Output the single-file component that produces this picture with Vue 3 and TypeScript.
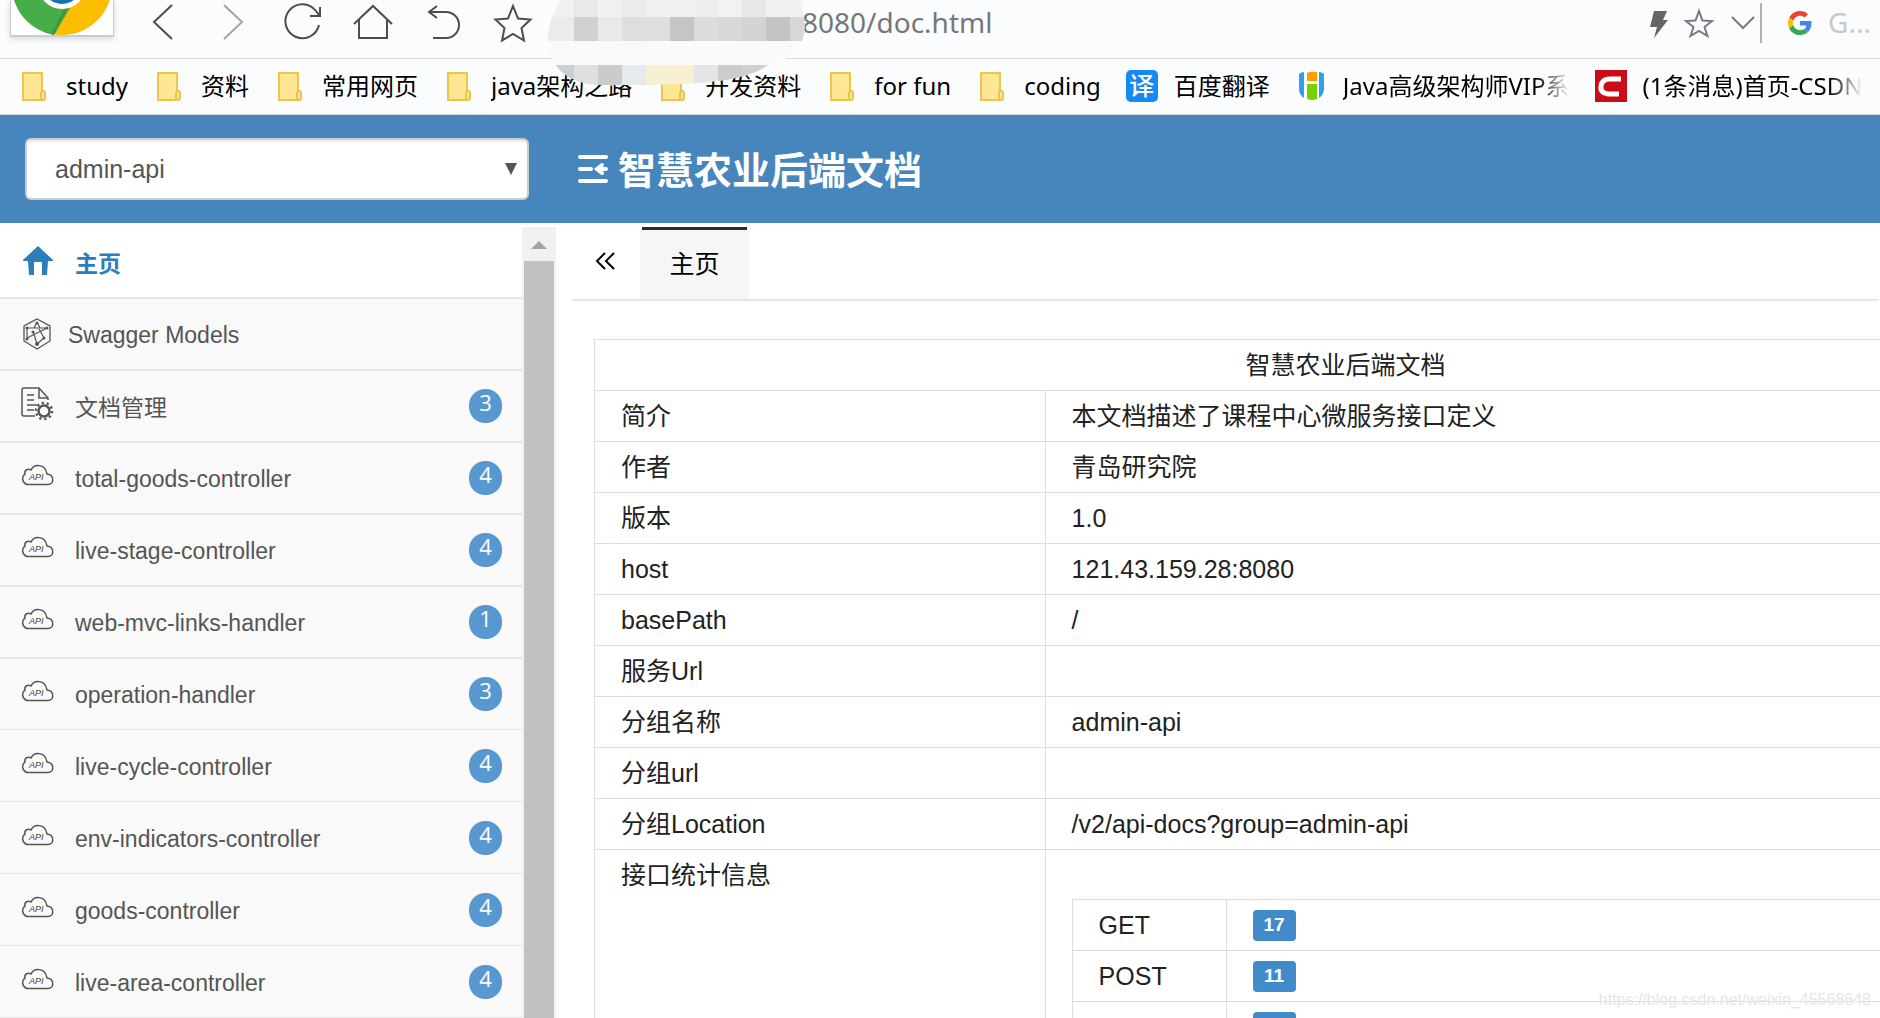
<script setup lang="ts">
import { ref } from 'vue'

interface Bookmark {
  label: string
  icon: 'folder' | 'translate' | 'h' | 'csdn'
}

interface MenuItem {
  label: string
  icon: 'home' | 'model' | 'doc' | 'api'
  count?: number
}

const group = ref('admin-api')
const address = ref('8080/doc.html')

const bookmarks: Bookmark[] = [
  { label: 'study', icon: 'folder' },
  { label: '资料', icon: 'folder' },
  { label: '常用网页', icon: 'folder' },
  { label: 'java架构之路', icon: 'folder' },
  { label: '开发资料', icon: 'folder' },
  { label: 'for fun', icon: 'folder' },
  { label: 'coding', icon: 'folder' },
  { label: '百度翻译', icon: 'translate' },
  { label: 'Java高级架构师VIP系', icon: 'h' },
  { label: '(1条消息)首页-CSDN', icon: 'csdn' },
]

const menu: MenuItem[] = [
  { label: '主页', icon: 'home' },
  { label: 'Swagger Models', icon: 'model' },
  { label: '文档管理', icon: 'doc', count: 3 },
  { label: 'total-goods-controller', icon: 'api', count: 4 },
  { label: 'live-stage-controller', icon: 'api', count: 4 },
  { label: 'web-mvc-links-handler', icon: 'api', count: 1 },
  { label: 'operation-handler', icon: 'api', count: 3 },
  { label: 'live-cycle-controller', icon: 'api', count: 4 },
  { label: 'env-indicators-controller', icon: 'api', count: 4 },
  { label: 'goods-controller', icon: 'api', count: 4 },
  { label: 'live-area-controller', icon: 'api', count: 4 },
]

const info: [string, string][] = [
  ['简介', '本文档描述了课程中心微服务接口定义'],
  ['作者', '青岛研究院'],
  ['版本', '1.0'],
  ['host', '121.43.159.28:8080'],
  ['basePath', '/'],
  ['服务Url', ''],
  ['分组名称', 'admin-api'],
  ['分组url', ''],
  ['分组Location', '/v2/api-docs?group=admin-api'],
]

const stats: [string, string][] = [
  ['GET', '17'],
  ['POST', '11'],
  ['', ''],
]

const mosaic = [
  { y: 0, h: 17, cells: ['#f0f1f2', '#e8e9ea', '#f0f1f2', '#ebebec', '#eff0f1', '#eff0f1', '#eeeeef', '#f1f2f3', '#e7e8e9', '#f1f1f2', '#f1f1f2'] },
  { y: 17, h: 24, cells: ['#eaebec', '#cfd0d1', '#e9e9ea', '#dddedf', '#dfdfe0', '#c5c5c7', '#dcdcde', '#d8d8da', '#d3d4d5', '#c3c4c6', '#d7d7d8'] },
  { y: 41, h: 24, cells: Array(11).fill('#f9fafc') as string[] },
  { y: 65, h: 20, cells: ['#cbcfd2', '#dedfe1', '#cbcbcd', '#e5eaed', '#f8f0d2', '#f9f0cf', '#e4e5e6', '#cbccce', '#d0d0d2', '#cbcbcd', '#cbcbcd'] },
]
</script>

<template>
  <div class="window">
    <div class="toolbar">
      <div class="brand">
        <svg width="102" height="35" viewBox="11 0 102 35" aria-hidden="true">
          <circle cx="62" cy="-15" r="50" fill="#fdbd00" />
          <path d="M12 -15 L38 -20 L70 8 L54 35 A50 50 0 0 1 12 -15Z" fill="#46ad48" />
          <path d="M70 5 L54 35 L51 34 L64 9Z" fill="#3a9a40" />
          <circle cx="62" cy="-15" r="24" fill="#fff" />
          <circle cx="62" cy="-15" r="19" fill="#1273b8" />
        </svg>
      </div>
      <button class="nav" aria-label="back">
        <svg viewBox="0 0 70 44"><path d="M44 5 26 22 44 39" /></svg>
      </button>
      <button class="nav dim" aria-label="forward">
        <svg viewBox="0 0 70 44"><path d="M26 5 44 22 26 39" /></svg>
      </button>
      <button class="nav" aria-label="reload">
        <svg viewBox="0 0 70 44"><path d="M51 25A17 17 0 1 1 48 11L51 15M52 7V16H42" /></svg>
      </button>
      <button class="nav" aria-label="home">
        <svg viewBox="0 0 70 44"><path d="M16 24 35 6 54 24M21 20V38H49V20" /></svg>
      </button>
      <button class="nav" aria-label="undo">
        <svg viewBox="0 0 70 44"><path d="M29 6 21 12 29 18M21 12H38A13 13 0 0 1 38 38H25" /></svg>
      </button>
      <button class="nav" aria-label="favourite">
        <svg viewBox="0 0 70 44">
          <path d="M35 6 40 18.500 52.500 19.500 43.500 28 46 40.500 35 34 24 40.500 26.500 28 17.500 19.500 30 18.500Z" />
        </svg>
      </button>
      <input v-model="address" class="address" aria-label="address" />
      <button class="tool" aria-label="speed">
        <svg viewBox="0 0 40 48">
          <path d="M14 11H27L23 20H28L14 38 17 27H10Z" fill="#666" />
        </svg>
      </button>
      <button class="tool" aria-label="collect">
        <svg viewBox="0 0 40 48">
          <path d="M19 11 22.500 20.500 32 21 24.500 27 27.500 36 19 31 10.500 36 13.500 27 6 21 15.500 20.500Z" fill="none" stroke="#777a7e" stroke-width="2" />
        </svg>
      </button>
      <button class="tool" aria-label="more">
        <svg viewBox="0 0 40 48"><path d="M12 17 23 28 34 17" fill="none" stroke="#777a7e" stroke-width="2" /></svg>
      </button>
      <div class="search">
        <svg width="24" height="24" viewBox="0 0 48 48" aria-hidden="true">
          <path fill="#ea4335" d="M24 9.500c3.540 0 6.710 1.220 9.210 3.600l6.850-6.850C35.900 2.380 30.470 0 24 0 14.620 0 6.510 5.380 2.560 13.220l7.980 6.190C12.430 13.720 17.740 9.500 24 9.500z" />
          <path fill="#4285f4" d="M46.980 24.550c0-1.570-.15-3.090-.38-4.550H24v9.020h12.940c-.58 2.960-2.260 5.480-4.780 7.180l7.730 6c4.510-4.180 7.090-10.360 7.090-17.650z" />
          <path fill="#fbbc05" d="M10.530 28.590c-.48-1.450-.76-2.990-.76-4.590s.27-3.140.76-4.590l-7.980-6.190C.92 16.460 0 20.120 0 24c0 3.880.92 7.540 2.560 10.780l7.970-6.190z" />
          <path fill="#34a853" d="M24 48c6.480 0 11.930-2.130 15.890-5.810l-7.730-6c-2.150 1.450-4.920 2.300-8.160 2.300-6.260 0-11.570-4.220-13.470-9.910l-7.980 6.190C6.510 42.620 14.620 48 24 48z" />
        </svg>
        <input placeholder="G..." aria-label="search" />
      </div>
    </div>

    <nav class="bookmarks">
      <a v-for="b in bookmarks" :key="b.label" href="#" class="bookmark">
        <svg v-if="b.icon === 'folder'" width="32" height="32" viewBox="0 0 32 32">
          <path d="M5 3H24V30H5Z" fill="#ffe694" stroke="#ecc54a" stroke-width="2" />
          <rect x="23" y="21" width="4" height="9" rx="2" fill="#ffe694" stroke="#ecc54a" stroke-width="2" />
        </svg>
        <span v-else-if="b.icon === 'translate'" class="translate">译</span>
        <svg v-else-if="b.icon === 'h'" width="32" height="32" viewBox="0 0 32 32">
          <rect width="32" height="32" fill="#fff" />
          <path d="M9 2V28C6 26 4 23 4 19V4Q6 2 9 2Z" fill="#29a0f5" />
          <path d="M24 2V28C27 26 29 23 29 19V4Q27 2 24 2Z" fill="#29a0f5" />
          <path d="M12 3Q16 1 22 2V11H12Z" fill="#ff9c00" />
          <path d="M12 14H22V29Q17 31 12 29Z" fill="#76d100" />
        </svg>
        <svg v-else width="32" height="32" viewBox="0 0 32 32">
          <rect width="32" height="32" fill="#cb0c17" />
          <path d="M26 9H15Q7 9 6 16T13 24H24" fill="none" stroke="#fff" stroke-width="5" />
        </svg>
        <span class="bookmark-label">{{ b.label }}</span>
      </a>
    </nav>

    <svg class="mosaic" width="258" height="85" viewBox="0 0 258 85" aria-hidden="true">
      <defs>
        <clipPath id="blob">
          <path d="M14 0C6 12 2 24 1 36C2 58 10 82 50 85H106C150 84 200 82 221 65C244 60 258 48 258 24L254 0Z" />
        </clipPath>
      </defs>
      <g clip-path="url(#blob)" shape-rendering="crispEdges">
        <template v-for="row in mosaic" :key="row.y">
          <rect
            v-for="(c, i) in row.cells"
            :key="i"
            :x="i === 0 ? 0 : 3 + i * 24"
            :y="row.y"
            :width="i === 0 ? 27 : 24"
            :height="row.h"
            :fill="c"
          />
        </template>
      </g>
    </svg>

    <header class="header">
      <div class="picker">
        <select v-model="group" aria-label="group">
          <option>admin-api</option>
        </select>
        <svg class="caret" width="12" height="12" viewBox="0 0 12 12"><path d="M0 0H12L6 12Z" fill="#555" /></svg>
      </div>
      <svg class="fold" width="30" height="28" viewBox="0 0 30 28" fill="none" stroke="#fff" stroke-width="4" stroke-linecap="round">
        <path d="M2 2H28M2 14H13M2 26H28" />
        <path d="M28 14H20M24 10 19 14 24 18" />
      </svg>
      <h1>智慧农业后端文档</h1>
    </header>

    <div class="body">
      <aside class="sidebar">
        <ul class="menu">
          <li v-for="m in menu" :key="m.label" :class="[m.icon]">
            <a href="#">
              <span class="glyph">
                <svg v-if="m.icon === 'home'" width="30" height="30" viewBox="0 0 30 30">
                  <path d="M15 0 30 14V15H25L24 29H19V16H11V29H6L5 15H0V14Z" fill="#2b7dbc" />
                </svg>
                <svg v-else-if="m.icon === 'model'" width="34" height="32" viewBox="0 0 34 32" fill="none" stroke="#555">
                  <path d="M17 1 30 8V23L17 31 4 23V8Z" stroke-width="1.300" />
                  <path d="M7 10H27M17 26 13 13M7 10V20L27 10M17 4 14 10M17 4 20 10M24 20 19 11M17 26 24 20" stroke-width="1.200" />
                  <g fill="#555" stroke="none">
                    <circle cx="17" cy="5" r="1.500" /><circle cx="7" cy="10" r="1.500" /><circle cx="27" cy="10" r="1.500" />
                    <circle cx="13" cy="14" r="1.500" /><circle cx="7" cy="21" r="1.500" /><circle cx="17" cy="26" r="2" /><circle cx="24" cy="20" r="1.500" />
                  </g>
                </svg>
                <svg v-else-if="m.icon === 'doc'" width="34" height="34" viewBox="0 0 34 34" fill="none" stroke="#555" stroke-width="1.500">
                  <path d="M15 30H4Q2 30 2 28V4Q2 2 4 2H19L28 12V14M19 2V12H28M7 9H14M7 14H14M7 19H17M7 24H14" />
                  <circle cx="24" cy="25" r="5.500" stroke-width="2.500" />
                  <circle cx="24" cy="25" r="8" stroke-width="2.500" stroke-dasharray="2.200 2.827" />
                </svg>
                <svg v-else width="34" height="22" viewBox="0 0 34 22">
                  <path d="M7 20.500A6 6 0 0 1 5 10C4 6 8 4 11 6C14 0 25 -1 27 10C35 11 34 20.500 28 20.500Z" fill="none" stroke="#555" stroke-width="1.500" />
                  <text x="9" y="16" font-size="9" font-style="italic" fill="#444">API</text>
                </svg>
              </span>
              <span class="name">{{ m.label }}</span>
              <span v-if="m.count" class="count">{{ m.count }}</span>
            </a>
          </li>
          <li class="tail"></li>
        </ul>
        <div class="scroll">
          <svg width="34" height="34" viewBox="0 0 34 34"><path d="M9 22 17 14 25 22Z" fill="#a3a3a3" /></svg>
          <div class="thumb"></div>
        </div>
      </aside>

      <main class="content">
        <div class="tabs">
          <button class="prev" aria-label="previous tabs">
            <svg width="20" height="18" viewBox="0 0 20 18" fill="none" stroke="#000" stroke-width="2">
              <path d="M10 1 2 9 10 17M19 1 11 9 19 17" />
            </svg>
          </button>
          <button class="tab">主页</button>
        </div>
        <div class="pane">
          <table class="grid info">
            <thead>
              <tr><th colspan="2">智慧农业后端文档</th></tr>
            </thead>
            <tbody>
              <tr v-for="[k, v] in info" :key="k">
                <td class="key">{{ k }}</td>
                <td>{{ v }}</td>
              </tr>
              <tr>
                <td class="key">接口统计信息</td>
                <td class="nest">
                  <table class="grid">
                    <tbody>
                      <tr v-for="[k, v] in stats" :key="k">
                        <td class="method">{{ k }}</td>
                        <td><span class="label">{{ v }}</span></td>
                      </tr>
                    </tbody>
                  </table>
                </td>
              </tr>
            </tbody>
          </table>
        </div>
      </main>
    </div>
    <div class="watermark">https://blog.csdn.net/weixin_45568648</div>
  </div>
</template>

<style>
body {
  margin: 0;
  overflow: hidden;
}
</style>

<style scoped>
.window {
  position: relative;
  display: flex;
  flex-direction: column;
  height: 100vh;
  overflow: hidden;
  background: #fff;
  font-family: "Liberation Sans", "Noto Sans CJK SC", sans-serif;
}
.window * {
  box-sizing: border-box;
}
svg {
  display: block;
  flex: none;
}
button {
  padding: 0;
  border: 0;
  background: none;
  font: inherit;
}
a {
  color: inherit;
  text-decoration: none;
}
.toolbar {
  display: flex;
  align-items: flex-start;
  flex: none;
  height: 59px;
  border-bottom: 1px solid #d9dadc;
  background: #fbfcfe;
}
.brand {
  flex: none;
  width: 104px;
  height: 37px;
  margin: 0 14px 0 10px;
  border: solid #ccc;
  border-width: 0 1px 2px;
  background: #fff;
  box-shadow: 0 2px 6px rgba(0, 0, 0, 0.15);
}
.nav {
  flex: none;
  width: 70px;
}
.nav svg {
  width: 70px;
  height: 44px;
  fill: none;
  stroke: #4d4d4f;
  stroke-width: 2;
}
.nav.dim svg {
  stroke: #a3a3a5;
}
.address {
  flex: 1;
  min-width: 0;
  height: 44px;
  padding: 0 0 0 254px;
  border: 0;
  background: none;
  color: #777;
  font: 28px/44px "Noto Sans", sans-serif;
}
.tool {
  flex: none;
  width: 40px;
}
.tool svg {
  width: 40px;
  height: 48px;
}
.search {
  display: flex;
  align-items: center;
  gap: 16px;
  flex: none;
  width: 120px;
  height: 40px;
  margin-top: 3px;
  padding-left: 26px;
  border-left: 2px solid #b0b0b2;
}
.search input {
  width: 52px;
  height: 38px;
  margin-bottom: 2px;
  padding: 0;
  border: 0;
  background: none;
  font: 28px/38px "Noto Sans", sans-serif;
}
.search input::placeholder {
  color: #c8c8ca;
  opacity: 1;
}
.bookmarks {
  display: flex;
  align-items: center;
  gap: 25px;
  flex: none;
  height: 56px;
  padding: 0 10px 2px 18px;
  border-bottom: 1px solid #d9d9d9;
  background: #fbfcfe;
  color: #000;
  font: 24px/36px "Noto Sans", "Noto Sans CJK SC", sans-serif;
  white-space: nowrap;
}
.bookmark {
  display: flex;
  align-items: center;
  gap: 16px;
  flex: none;
}
.bookmark-label {
  max-width: 228px;
  overflow: hidden;
}
.bookmark:nth-child(n + 9) .bookmark-label {
  mask-image: linear-gradient(to right, #000 85%, transparent);
}
.translate {
  width: 32px;
  height: 32px;
  border-radius: 5px;
  background: #1689f5;
  color: #fff;
  font-size: 25px;
  font-weight: 500;
  line-height: 31px;
  text-align: center;
}
.mosaic {
  position: absolute;
  top: 0;
  left: 547px;
}
.header {
  display: flex;
  align-items: center;
  flex: none;
  height: 108px;
  padding-left: 25px;
  background: #4786bc;
}
.picker {
  position: relative;
  flex: none;
  width: 504px;
  margin-right: 49px;
}
.picker select {
  display: block;
  width: 100%;
  height: 62px;
  padding: 0 40px 0 28px;
  border: 2px solid #ccc;
  border-radius: 6px;
  appearance: none;
  background: #fff;
  box-shadow: inset 0 2px 2px rgba(0, 0, 0, 0.08);
  color: #555;
  font: 25px "Liberation Sans", sans-serif;
}
.caret {
  position: absolute;
  top: 25px;
  right: 12px;
}
.header h1 {
  margin: 0 0 0 10px;
  padding-top: 4px;
  color: #fff;
  font-size: 38px;
  font-weight: 700;
  line-height: 56px;
}
.body {
  display: flex;
  flex: 1;
  min-height: 0;
  padding-top: 4px;
}
.sidebar {
  display: flex;
  flex: none;
  width: 556px;
}
.menu {
  flex: 1;
  margin: 0;
  padding: 0;
  list-style: none;
  color: #555;
  font-size: 23px;
}
.menu li {
  height: 72px;
  border-top: 2px solid #e5e5e5;
  background: #f9f9f9;
}
.menu li:nth-child(n + 8) {
  padding-top: 1px;
  border-top-width: 1px;
}
.menu li.home {
  height: 70px;
  border-top: 0;
  background: #fff;
  color: #2b7dbc;
  font-weight: 700;
}
.menu a {
  display: flex;
  align-items: center;
  height: 70px;
  padding: 0 20px;
}
.home a {
  padding-bottom: 3px;
}
.glyph {
  display: flex;
  align-items: center;
  justify-content: center;
  flex: none;
  width: 34px;
  height: 40px;
  margin-right: 21px;
}
.home .glyph {
  width: 36px;
  margin-right: 19px;
}
.model .glyph {
  margin-right: 14px;
}
.api .glyph,
.doc .glyph {
  height: 34px;
  margin-bottom: 6px;
}
.name {
  flex: 1;
  padding-top: 2px;
}
.doc .name {
  padding-top: 0;
}
.count {
  width: 33px;
  height: 34px;
  border-radius: 16px;
  background: #5898d0;
  color: #fff;
  font: 22px/27px "Open Sans", sans-serif;
  text-align: center;
}
.scroll {
  flex: none;
  width: 34px;
  display: flex;
  flex-direction: column;
  background: #f1f1f1;
}
.thumb {
  flex: 1;
  margin: 0 2px;
  background: #c1c1c1;
}
.content {
  flex: 1;
  min-width: 0;
  padding-left: 14px;
}
.tabs {
  display: flex;
  height: 72px;
  box-shadow: 0 3px 3px -2px rgba(0, 0, 0, 0.2);
}
.prev {
  display: flex;
  align-items: center;
  justify-content: center;
  width: 70px;
  height: 68px;
}
.tab {
  position: relative;
  width: 109px;
  padding-bottom: 3px;
  background: #f6f6f6;
  color: #000;
  font-size: 25px;
}
.tab::before {
  content: "";
  position: absolute;
  top: 0;
  left: 2px;
  right: 2px;
  height: 3px;
  background: #292c33;
}
.pane {
  margin-right: -217px;
  padding: 40px 0 0 24px;
}
.grid {
  width: 100%;
  border-collapse: collapse;
  color: #222;
  font-size: 25px;
  line-height: 36px;
}
.grid th,
.grid td {
  height: 51px;
  padding: 0 26px;
  border: 1px solid #ddd;
  font-weight: 400;
  text-align: left;
  vertical-align: middle;
}
.grid th {
  text-align: center;
}
.grid .key {
  width: 30%;
  padding-top: 7px;
  padding-bottom: 7px;
  vertical-align: top;
}
.grid .nest {
  padding-top: 49px;
  padding-bottom: 30px;
}
.grid .method {
  width: 154px;
}
.label {
  display: block;
  width: 43px;
  height: 31px;
  border-radius: 4px;
  background: #428bca;
  color: #fff;
  font-size: 19px;
  font-weight: 700;
  line-height: 29px;
  text-align: center;
}
.watermark {
  position: absolute;
  right: 9px;
  bottom: 8px;
  color: #e6e6e6;
  font-size: 16px;
  line-height: 20px;
}
</style>
